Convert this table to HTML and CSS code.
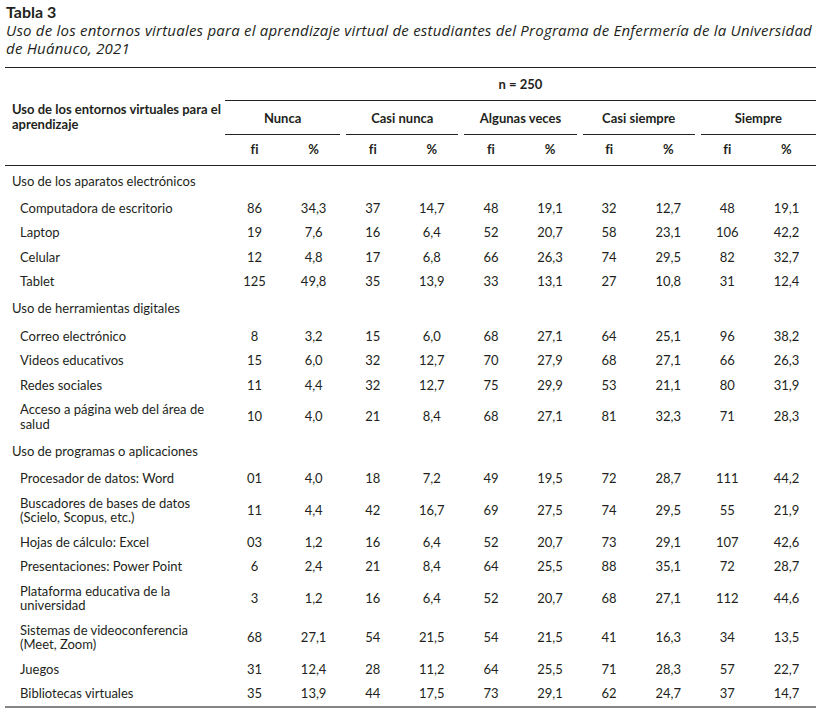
FILE: index.html
```html
<!DOCTYPE html>
<html lang="es">
<head>
<meta charset="utf-8">
<title>Tabla 3</title>
<link rel="stylesheet" href="styles.css">
</head>
<body>
<div class="page">
  <div class="caption">
    <div class="caption-title">Tabla 3</div>
    <div class="caption-text">Uso de los entornos virtuales para el aprendizaje virtual de estudiantes del Programa de Enfermería de la Universidad<br>de Huánuco, 2021</div>
  </div>
  <table class="data">
    <colgroup>
      <col class="col-label">
      <col span="10" class="col-num">
    </colgroup>
    <thead>
      <tr class="h1">
        <th rowspan="3" class="head-label">Uso de los entornos virtuales para el aprendizaje</th>
        <th colspan="10" class="n-cell">n = 250</th>
      </tr>
      <tr class="h2">
        <th colspan="2" class="grp first"><div class="grp-in">Nunca</div></th>
        <th colspan="2" class="grp"><div class="grp-in">Casi nunca</div></th>
        <th colspan="2" class="grp"><div class="grp-in">Algunas veces</div></th>
        <th colspan="2" class="grp"><div class="grp-in">Casi siempre</div></th>
        <th colspan="2" class="grp last"><div class="grp-in">Siempre</div></th>
      </tr>
      <tr class="h3">
        <th>fi</th><th>%</th><th>fi</th><th>%</th><th>fi</th><th>%</th><th>fi</th><th>%</th><th>fi</th><th>%</th>
      </tr>
    </thead>
    <tbody>
      <tr class="section"><td colspan="11">Uso de los aparatos electrónicos</td></tr>
      <tr><td class="lbl">Computadora de escritorio</td><td>86</td><td>34,3</td><td>37</td><td>14,7</td><td>48</td><td>19,1</td><td>32</td><td>12,7</td><td>48</td><td>19,1</td></tr>
      <tr><td class="lbl">Laptop</td><td>19</td><td>7,6</td><td>16</td><td>6,4</td><td>52</td><td>20,7</td><td>58</td><td>23,1</td><td>106</td><td>42,2</td></tr>
      <tr><td class="lbl">Celular</td><td>12</td><td>4,8</td><td>17</td><td>6,8</td><td>66</td><td>26,3</td><td>74</td><td>29,5</td><td>82</td><td>32,7</td></tr>
      <tr><td class="lbl">Tablet</td><td>125</td><td>49,8</td><td>35</td><td>13,9</td><td>33</td><td>13,1</td><td>27</td><td>10,8</td><td>31</td><td>12,4</td></tr>
      <tr class="section"><td colspan="11">Uso de herramientas digitales</td></tr>
      <tr><td class="lbl">Correo electrónico</td><td>8</td><td>3,2</td><td>15</td><td>6,0</td><td>68</td><td>27,1</td><td>64</td><td>25,1</td><td>96</td><td>38,2</td></tr>
      <tr><td class="lbl">Videos educativos</td><td>15</td><td>6,0</td><td>32</td><td>12,7</td><td>70</td><td>27,9</td><td>68</td><td>27,1</td><td>66</td><td>26,3</td></tr>
      <tr><td class="lbl">Redes sociales</td><td>11</td><td>4,4</td><td>32</td><td>12,7</td><td>75</td><td>29,9</td><td>53</td><td>21,1</td><td>80</td><td>31,9</td></tr>
      <tr><td class="lbl">Acceso a página web del área de salud</td><td>10</td><td>4,0</td><td>21</td><td>8,4</td><td>68</td><td>27,1</td><td>81</td><td>32,3</td><td>71</td><td>28,3</td></tr>
      <tr class="section"><td colspan="11">Uso de programas o aplicaciones</td></tr>
      <tr><td class="lbl">Procesador de datos: Word</td><td>01</td><td>4,0</td><td>18</td><td>7,2</td><td>49</td><td>19,5</td><td>72</td><td>28,7</td><td>111</td><td>44,2</td></tr>
      <tr><td class="lbl">Buscadores de bases de datos (Scielo, Scopus, etc.)</td><td>11</td><td>4,4</td><td>42</td><td>16,7</td><td>69</td><td>27,5</td><td>74</td><td>29,5</td><td>55</td><td>21,9</td></tr>
      <tr><td class="lbl">Hojas de cálculo: Excel</td><td>03</td><td>1,2</td><td>16</td><td>6,4</td><td>52</td><td>20,7</td><td>73</td><td>29,1</td><td>107</td><td>42,6</td></tr>
      <tr><td class="lbl">Presentaciones: Power Point</td><td>6</td><td>2,4</td><td>21</td><td>8,4</td><td>64</td><td>25,5</td><td>88</td><td>35,1</td><td>72</td><td>28,7</td></tr>
      <tr><td class="lbl">Plataforma educativa de la universidad</td><td>3</td><td>1,2</td><td>16</td><td>6,4</td><td>52</td><td>20,7</td><td>68</td><td>27,1</td><td>112</td><td>44,6</td></tr>
      <tr><td class="lbl">Sistemas de videoconferencia (Meet, Zoom)</td><td>68</td><td>27,1</td><td>54</td><td>21,5</td><td>54</td><td>21,5</td><td>41</td><td>16,3</td><td>34</td><td>13,5</td></tr>
      <tr><td class="lbl">Juegos</td><td>31</td><td>12,4</td><td>28</td><td>11,2</td><td>64</td><td>25,5</td><td>71</td><td>28,3</td><td>57</td><td>22,7</td></tr>
      <tr class="last-row"><td class="lbl">Bibliotecas virtuales</td><td>35</td><td>13,9</td><td>44</td><td>17,5</td><td>73</td><td>29,1</td><td>62</td><td>24,7</td><td>37</td><td>14,7</td></tr>
    </tbody>
  </table>
</div>
</body>
</html>
```
FILE: styles.css
```css
html, body {
  margin: 0;
  padding: 0;
  background: #ffffff;
}
body {
  font-family: "Lato", "Open Sans", "DejaVu Sans", sans-serif;
  color: #231f20;
  font-variant-ligatures: none;
}
.page {
  padding: 3px 9px 0 5px;
}
.caption {
  padding-left: 1px;
}
.caption-title {
  font-weight: 700;
  font-size: 16px;
  line-height: 18px;
}
.caption-text {
  font-family: "Open Sans", "Lato", sans-serif;
  font-style: italic;
  font-size: 15px;
  letter-spacing: 0.22px;
  line-height: 18px;
  white-space: nowrap;
}
table.data {
  margin-top: 10px;
  width: 811px;
  border-collapse: collapse;
  table-layout: fixed;
  font-size: 13px;
}
.col-label { width: 220px; }
.col-num { width: 59.1px; }

table.data thead tr.h1 th {
  border-top: 1px solid #222;
}
table.data th {
  font-weight: 700;
  padding: 0;
  text-align: center;
  line-height: 15px;
}
table.data th.head-label {
  text-align: left;
  padding-left: 7px;
  vertical-align: middle;
  border-bottom: 1px solid #222;
}
tr.h1 { height: 33px; }
tr.h2 { height: 34px; }
tr.h3 { height: 31px; }
table.data th.n-cell {
  border-bottom: 1px solid #222;
}
table.data th.grp {
  vertical-align: bottom;
}
.grp-in {
  margin: 0 3px;
  padding: 9px 0 8px;
  border-bottom: 1px solid #222;
}
th.grp.first .grp-in { margin-left: 0; }
th.grp.last .grp-in { margin-right: 0; }
tr.h3 th {
  border-bottom: 1px solid #222;
}
table.data td {
  padding: 5px 4px;
  line-height: 14.5px;
  text-align: center;
  vertical-align: middle;
}
table.data td.lbl {
  text-align: left;
  padding-left: 15px;
}
table.data tr.section td {
  height: 30px;
  padding: 0 0 0 7px;
  text-align: left;
  box-sizing: border-box;
}
tr.last-row td {
  border-bottom: 2px solid #858585;
}
```
